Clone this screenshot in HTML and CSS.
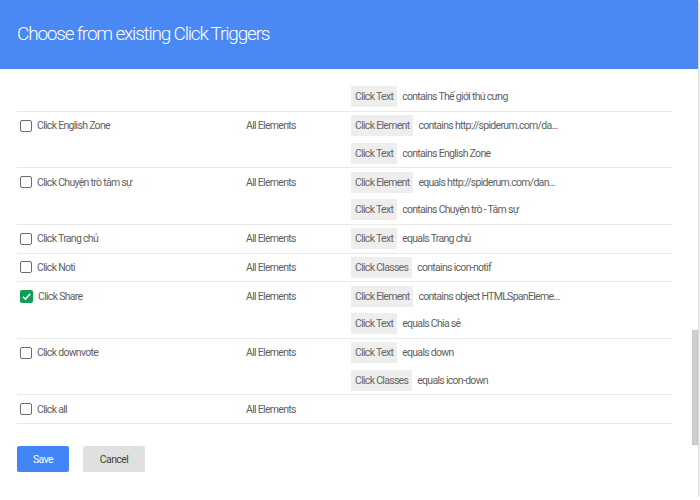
FILE: index.html
```html
<!DOCTYPE html>
<html>
<head>
<meta charset="utf-8">
<link rel="stylesheet" href="styles.css">
</head>
<body>
<div class="dialog">
  <div class="header">
    <h1 class="title">Choose from existing Click Triggers</h1>
  </div>
  <div class="body">
    <div class="list">
      <div class="trigger partial">
        <div class="name"></div>
        <div class="type"></div>
        <div class="filters">
          <div class="filter"><span class="chip">Click Text</span><span class="cond">contains Thế giới thú cưng</span></div>
        </div>
      </div>
      <div class="trigger">
        <div class="name"><span class="box"></span>Click English Zone</div>
        <div class="type">All Elements</div>
        <div class="filters">
          <div class="filter"><span class="chip">Click Element</span><span class="cond">contains http://spiderum.com/da...</span></div>
          <div class="filter"><span class="chip">Click Text</span><span class="cond">contains English Zone</span></div>
        </div>
      </div>
      <div class="trigger">
        <div class="name"><span class="box"></span>Click Chuyện trò tâm sự</div>
        <div class="type">All Elements</div>
        <div class="filters">
          <div class="filter"><span class="chip">Click Element</span><span class="cond">equals http://spiderum.com/dan...</span></div>
          <div class="filter"><span class="chip">Click Text</span><span class="cond">contains Chuyện trò - Tâm sự</span></div>
        </div>
      </div>
      <div class="trigger">
        <div class="name"><span class="box"></span>Click Trang chủ</div>
        <div class="type">All Elements</div>
        <div class="filters">
          <div class="filter"><span class="chip">Click Text</span><span class="cond">equals Trang chủ</span></div>
        </div>
      </div>
      <div class="trigger">
        <div class="name"><span class="box"></span>Click Noti</div>
        <div class="type">All Elements</div>
        <div class="filters">
          <div class="filter"><span class="chip">Click Classes</span><span class="cond">contains icon-notif</span></div>
        </div>
      </div>
      <div class="trigger">
        <div class="name"><span class="box checked"><svg viewBox="0 0 13 13" width="13" height="13"><path d="M3 6.8 L5.4 9.2 L10.2 3.9" fill="none" stroke="#fff" stroke-width="1.6"/></svg></span>Click Share</div>
        <div class="type">All Elements</div>
        <div class="filters">
          <div class="filter"><span class="chip">Click Element</span><span class="cond">contains object HTMLSpanEleme...</span></div>
          <div class="filter"><span class="chip">Click Text</span><span class="cond">equals Chia sẻ</span></div>
        </div>
      </div>
      <div class="trigger">
        <div class="name"><span class="box"></span>Click downvote</div>
        <div class="type">All Elements</div>
        <div class="filters">
          <div class="filter"><span class="chip">Click Text</span><span class="cond">equals down</span></div>
          <div class="filter"><span class="chip">Click Classes</span><span class="cond">equals icon-down</span></div>
        </div>
      </div>
      <div class="trigger">
        <div class="name"><span class="box"></span>Click all</div>
        <div class="type">All Elements</div>
        <div class="filters">
          <div class="filter"></div>
        </div>
      </div>
    </div>
    <div class="actions">
      <button class="btn save">Save</button>
      <button class="btn cancel">Cancel</button>
    </div>
    <div class="scrollthumb"></div>
  </div>
</div>
</body>
</html>
```
FILE: styles.css
```css
html, body {
  margin: 0;
  padding: 0;
  background: #ffffff;
}
body {
  font-family: Roboto, "Noto Sans", sans-serif;
  color: #5f5f5f;
}
.dialog {
  width: 698px;
  height: 497px;
  background: #fff;
  box-shadow: 0 1px 3px rgba(0,0,0,0.35);
  display: flex;
  flex-direction: column;
  overflow: hidden;
}
.header {
  height: 69px;
  background: #4a89f3;
  display: flex;
  align-items: center;
  padding-left: 17px;
  flex-shrink: 0;
}
.title {
  margin: 0;
  font-size: 19px;
  font-weight: 300;
  color: #fff;
  letter-spacing: -1.2px;
  padding-bottom: 2px;
}
.body {
  position: relative;
  flex: 1;
  padding: 0 26px 0 17px;
}
.list {
  display: flex;
  flex-direction: column;
}
.trigger {
  display: grid;
  grid-template-columns: 229px 105px 1fr;
  border-bottom: 1px solid #e9e9e9;
  font-size: 10.5px;
  letter-spacing: -0.7px;
}
.trigger.partial {
  padding-top: 14px;
}
.name, .type {
  height: 27.75px;
  display: flex;
  align-items: center;
  color: #5f5f5f;
}
.name {
  padding-left: 3px;
  gap: 5px;
}
.box {
  width: 10px;
  height: 10px;
  border: 1.5px solid #6b6b6b;
  border-radius: 2px;
  flex-shrink: 0;
  display: flex;
}
.box.checked {
  width: 13px;
  height: 13px;
  border: none;
  background: #0f9d58;
}
.filters {
  display: flex;
  flex-direction: column;
}
.filter {
  height: 27.75px;
  display: flex;
  align-items: center;
  gap: 5px;
}
.chip {
  background: #eeeeee;
  color: #666;
  height: 21px;
  line-height: 21px;
  padding: 0 4px 0 4px;
}
.cond {
  color: #5f5f5f;
}
.actions {
  display: flex;
  gap: 14px;
  margin-top: 22px;
}
.btn {
  font-family: Roboto, "Noto Sans", sans-serif;
  font-size: 10.5px;
  letter-spacing: -0.6px;
  border: none;
  border-radius: 2px;
  height: 26px;
  padding: 0;
}
.save {
  width: 52px;
  background: #4285f4;
  color: #fff;
}
.cancel {
  width: 62px;
  background: #e0e0e0;
  color: #444;
}
.scrollthumb {
  position: absolute;
  right: 0;
  top: 261px;
  width: 6px;
  height: 115px;
  background: #cfcfcf;
  border: 1px solid #c4c4c4;
  box-sizing: border-box;
}
```
